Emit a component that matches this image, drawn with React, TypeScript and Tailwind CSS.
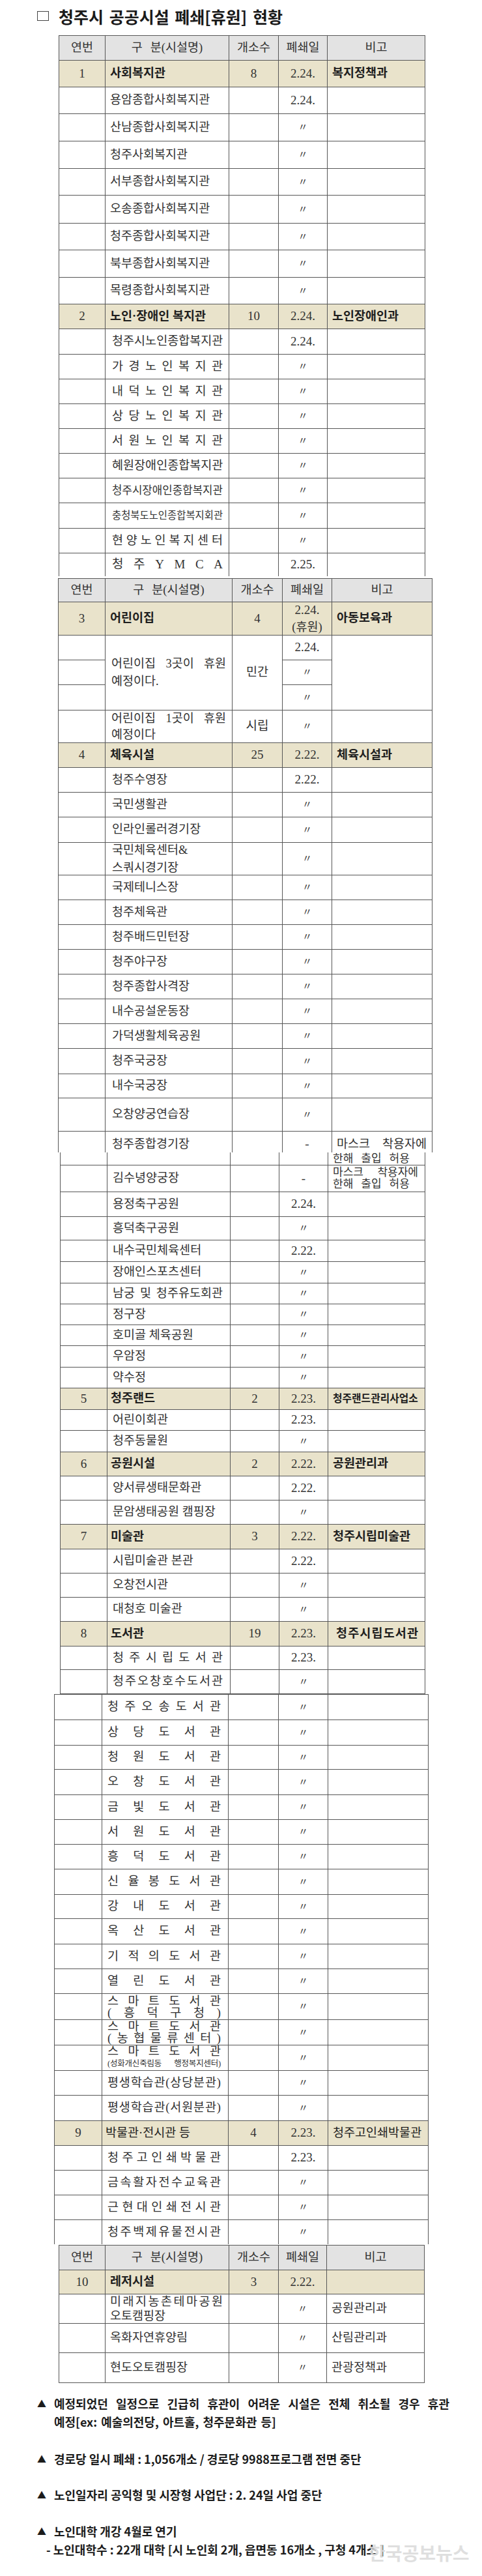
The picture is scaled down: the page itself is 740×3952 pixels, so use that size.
import type { ReactNode } from "react";

const DITTO = "〃";
const BD = "border-[#575757]";
const CAT = "bg-[#e9e3cb]";

function N({ children }: { children: ReactNode }) {
  return <span className="text-[19px]">{children}</span>;
}

function Spread({ t, className = "" }: { t: string; className?: string }) {
  return (
    <span className={`flex w-full justify-between ${className}`}>
      {Array.from(t).map((ch, i) => (
        <span key={i}>{ch}</span>
      ))}
    </span>
  );
}

function Words({ w, className = "" }: { w: string[]; className?: string }) {
  return (
    <span className={`flex w-full justify-between ${className}`}>
      {w.map((x, i) => (
        <span key={i}>{x}</span>
      ))}
    </span>
  );
}

type CellsProps = {
  h: string;
  no?: string;
  name?: ReactNode;
  cnt?: string;
  date?: ReactNode;
  note?: ReactNode;
  cat?: boolean;
  open?: boolean;
  pad?: string;
  x?: string;
};

function Cells({ h, no, name, cnt, date, note, cat, open, pad = "pl-[7px] pr-[9px]", x = "" }: CellsProps) {
  const b = `${h} flex items-center border-r ${open ? "" : "border-b"} ${BD} ${cat ? CAT : ""} ${x}`;
  const d =
    date === undefined ? (cat ? null : <span className="text-[15px]">{DITTO}</span>) : typeof date === "string" ? <N>{date}</N> : date;
  return (
    <>
      <div className={`${b} justify-center`}>{no && <N>{no}</N>}</div>
      <div className={`${b} ${pad} whitespace-nowrap ${cat ? "font-bold text-[#1f1f1f]" : ""}`}>{name}</div>
      <div className={`${b} justify-center`}>{cnt && <N>{cnt}</N>}</div>
      <div className={`${b} justify-center`}>{d}</div>
      <div className={`${b} pl-[7px] pr-[6px] whitespace-nowrap ${cat ? "font-bold text-[#1f1f1f]" : ""}`}>{note}</div>
    </>
  );
}

function Head({ h }: { h: string }) {
  const b = `${h} flex items-center justify-center border-r border-b ${BD} bg-[#e3e3e3]`;
  return (
    <>
      <div className={b}>연번</div>
      <div className={b}>
        <span>구</span>
        <span className="ml-[12px]">분(시설명)</span>
      </div>
      <div className={b}>개소수</div>
      <div className={b}>폐쇄일</div>
      <div className={b}>비고</div>
    </>
  );
}

function Seg({ cols, className = "", top = true, children }: { cols: string; className?: string; top?: boolean; children: ReactNode }) {
  return <div className={`grid w-fit border-l ${BD} ${top ? "border-t" : ""} ${cols} ${className}`}>{children}</div>;
}

function TwoLine({ a, b, className = "" }: { a: ReactNode; b: ReactNode; className?: string }) {
  return (
    <span className={`flex w-full flex-col ${className}`}>
      <span className="flex w-full">{a}</span>
      <span className="flex w-full">{b}</span>
    </span>
  );
}

function Note({ children, className = "" }: { children: ReactNode; className?: string }) {
  return (
    <div className={`flex pl-[57px] ${className}`}>
      <span className="flex h-[28px] w-[26px] shrink-0 items-center text-[14px]">▲</span>
      <div>{children}</div>
    </div>
  );
}

export default function App() {
  const padA = "pl-[10px] pr-[9px]";
  const padB = "pl-[10px] pr-[8px]";
  const padC = "pl-[8px] pr-[11px]";
  const padD = "pl-[8px] pr-[11px]";
  const cellB = `flex items-center border-r border-b ${BD}`;
  const maskLine = (
    <span className="flex gap-[12px]">
      <span>한해</span>
      <span>출입</span>
      <span>허용</span>
    </span>
  );

  return (
    <div className="relative h-[3952px] w-[740px] overflow-hidden bg-white font-['Liberation_Serif','Noto_Sans_CJK_KR',serif] text-[18.5px] text-[#333]">
      {/* title */}
      <div className="flex h-[54px] items-start pl-[57px] pt-[10px] font-['Noto_Sans_CJK_KR',sans-serif] text-[#1a1a1a]">
        <span className="mr-[15px] mt-[7px] h-[15px] w-[18px] border border-[#444]" />
        <span className="text-[25px] font-bold leading-[30px] [word-spacing:3px]">청주시 공공시설 폐쇄[휴원] 현황</span>
      </div>

      {/* 1 ~ 2 */}
      <Seg cols="grid-cols-[71px_190px_76px_75px_150px]" className="ml-[90px]">
        <Head h="h-[38px]" />
        <Cells h="h-[41px]" cat no="1" name="사회복지관" cnt="8" date="2.24." note="복지정책과" />
        <Cells h="h-[41px]" name="용암종합사회복지관" date="2.24." />
        <Cells h="h-[42px]" name="산남종합사회복지관" />
        <Cells h="h-[42px]" name="청주사회복지관" />
        <Cells h="h-[41px]" name="서부종합사회복지관" />
        <Cells h="h-[43px]" name="오송종합사회복지관" />
        <Cells h="h-[41px]" name="청주종합사회복지관" />
        <Cells h="h-[42px]" name="북부종합사회복지관" />
        <Cells h="h-[41px]" name="목령종합사회복지관" />
        <Cells h="h-[38px]" cat no="2" name="노인·장애인 복지관" cnt="10" date="2.24." note="노인장애인과" />
        <Cells h="h-[39px]" pad={padA} name={<Spread t="청주시노인종합복지관" />} date="2.24." />
        <Cells h="h-[38px]" pad={padA} name={<Spread t="가경노인복지관" />} />
        <Cells h="h-[38px]" pad={padA} name={<Spread t="내덕노인복지관" />} />
        <Cells h="h-[38px]" pad={padA} name={<Spread t="상당노인복지관" />} />
        <Cells h="h-[38px]" pad={padA} name={<Spread t="서원노인복지관" />} />
        <Cells h="h-[38px]" pad={padA} name={<Spread t="혜원장애인종합복지관" />} />
        <Cells h="h-[38px]" pad={padA} name={<Spread t="청주시장애인종합복지관" className="text-[16.8px]" />} />
        <Cells h="h-[39px]" pad={padA} name={<Spread t="충청북도노인종합복지회관" className="text-[15.4px]" />} />
        <Cells h="h-[38px]" pad={padA} name={<Spread t="현양노인복지센터" />} />
        <Cells h="h-[35px]" open pad={padA} name={<Spread t="청주YMCA" className="text-[19px]" />} date="2.25." />
      </Seg>

      {/* 3 ~ 4 */}
      <Seg cols="grid-cols-[72px_195px_77px_76px_154px]" className="ml-[89px] mt-[3px]">
        <Head h="h-[36px]" />
        <Cells
          h="h-[51px]"
          cat
          no="3"
          name="어린이집"
          cnt="4"
          date={
            <span className="flex flex-col items-center leading-[26px]">
              <N>2.24.</N>
              <span>(휴원)</span>
            </span>
          }
          note="아동보육과"
        />
        <div className={`h-[38px] ${cellB}`} />
        <div className={`row-span-3 ${cellB} pl-[9px] pr-[9px]`}>
          <span className="flex w-full flex-col leading-[27px]">
            <Words w={["어린이집", "3곳이", "휴원"]} />
            <span>예정이다.</span>
          </span>
        </div>
        <div className={`row-span-3 ${cellB} justify-center`}>민간</div>
        <div className={`h-[38px] ${cellB} justify-center`}>
          <N>2.24.</N>
        </div>
        <div className={`row-span-3 ${cellB}`} />
        <div className={`h-[38px] ${cellB}`} />
        <div className={`h-[38px] ${cellB} justify-center text-[15px]`}>{DITTO}</div>
        <div className={`h-[39px] ${cellB}`} />
        <div className={`h-[39px] ${cellB} justify-center text-[15px]`}>{DITTO}</div>
        <Cells
          h="h-[50px]"
          pad="pl-[9px] pr-[9px]"
          name={
            <span className="flex w-full flex-col leading-[25px]">
              <Words w={["어린이집", "1곳이", "휴원"]} />
              <span>예정이다</span>
            </span>
          }
          cnt="시립"
          note={null}
        />
        <Cells h="h-[38px]" cat no="4" name="체육시설" cnt="25" date="2.22." note="체육시설과" />
        <Cells h="h-[38px]" pad={padB} name="청주수영장" date="2.22." />
        <Cells h="h-[38px]" pad={padB} name="국민생활관" />
        <Cells h="h-[39px]" pad={padB} name="인라인롤러경기장" />
        <Cells h="h-[50px]" pad={padB} name={<TwoLine className="leading-[27px]" a="국민체육센터&" b="스쿼시경기장" />} />
        <Cells h="h-[38px]" pad={padB} name="국제테니스장" />
        <Cells h="h-[38px]" pad={padB} name="청주체육관" />
        <Cells h="h-[38px]" pad={padB} name="청주배드민턴장" />
        <Cells h="h-[38px]" pad={padB} name="청주야구장" />
        <Cells h="h-[38px]" pad={padB} name="청주종합사격장" />
        <Cells h="h-[38px]" pad={padB} name="내수공설운동장" />
        <Cells h="h-[38px]" pad={padB} name="가덕생활체육공원" />
        <Cells h="h-[39px]" pad={padB} name="청주국궁장" />
        <Cells h="h-[37px]" pad={padB} name="내수국궁장" />
        <Cells h="h-[51px]" pad={padB} name="오창양궁연습장" />
        <Cells
          h="h-[32px]"
          open
          x="pt-[7px]"
          pad={padB}
          name="청주종합경기장"
          date="-"
          note={<Words w={["마스크", "착용자에"]} className="pr-[2px]" />}
        />
      </Seg>

      {/* 4 (cont.) ~ 8 */}
      <Seg cols="grid-cols-[72px_189px_75px_75px_149px]" className="ml-[92px]" top={false}>
        <Cells h="h-[20px]" name={null} date={null} note={<span className="text-[17px] leading-[18px]">{maskLine}</span>} />
        <Cells
          h="h-[41px]"
          pad={padC}
          name="김수녕양궁장"
          date="-"
          note={
            <span className="flex w-full flex-col text-[17px] leading-[18px]">
              <Words w={["마스크", "착용자에"]} className="pr-[4px]" />
              {maskLine}
            </span>
          }
        />
        <Cells h="h-[38px]" pad={padC} name="용정축구공원" date="2.24." />
        <Cells h="h-[36px]" pad={padC} name="흥덕축구공원" />
        <Cells h="h-[33px]" pad={padC} name="내수국민체육센터" date="2.22." />
        <Cells h="h-[33px]" pad={padC} name="장애인스포츠센터" />
        <Cells h="h-[32px]" pad={padC} name={<Words w={["남궁", "및", "청주유도회관"]} />} />
        <Cells h="h-[32px]" pad={padC} name="정구장" />
        <Cells h="h-[32px]" pad={padC} name="호미골 체육공원" />
        <Cells h="h-[33px]" pad={padC} name="우암정" />
        <Cells h="h-[32px]" pad={padC} name="약수정" />
        <Cells h="h-[33px]" cat pad="pl-[5px]" no="5" name="청주랜드" cnt="2" date="2.23." note={<span className="text-[15.8px]">청주랜드관리사업소</span>} />
        <Cells h="h-[32px]" pad={padC} name="어린이회관" date="2.23." />
        <Cells h="h-[33px]" pad={padC} name="청주동물원" />
        <Cells h="h-[37px]" cat pad="pl-[5px]" no="6" name="공원시설" cnt="2" date="2.22." note="공원관리과" />
        <Cells h="h-[37px]" pad={padC} name="양서류생태문화관" date="2.22." />
        <Cells h="h-[37px]" pad={padC} name="문암생태공원 캠핑장" />
        <Cells h="h-[38px]" cat pad="pl-[5px]" no="7" name="미술관" cnt="3" date="2.22." note="청주시립미술관" />
        <Cells h="h-[37px]" pad={padC} name="시립미술관 본관" date="2.22." />
        <Cells h="h-[37px]" pad={padC} name="오창전시관" />
        <Cells h="h-[37px]" pad={padC} name="대청호 미술관" />
        <Cells h="h-[38px]" cat pad="pl-[5px]" no="8" name="도서관" cnt="19" date="2.23." note={<Spread t="청주시립도서관" className="pl-[5px] pr-[4px]" />} />
        <Cells h="h-[36px]" pad={padC} name={<Spread t="청주시립도서관" />} date="2.23." />
        <Cells h="h-[37px]" pad={padC} name={<Spread t="청주오창호수도서관" />} />
      </Seg>

      {/* 8 (cont.) ~ 9 */}
      <Seg cols="grid-cols-[73px_194px_77px_76px_154px]" className="ml-[83px]">
        <Cells h="h-[39px]" pad={padD} name={<Spread t="청주오송도서관" />} />
        <Cells h="h-[39px]" pad={padD} name={<Spread t="상당도서관" />} />
        <Cells h="h-[37px]" pad={padD} name={<Spread t="청원도서관" />} />
        <Cells h="h-[39px]" pad={padD} name={<Spread t="오창도서관" />} />
        <Cells h="h-[38px]" pad={padD} name={<Spread t="금빛도서관" />} />
        <Cells h="h-[38px]" pad={padD} name={<Spread t="서원도서관" />} />
        <Cells h="h-[38px]" pad={padD} name={<Spread t="흥덕도서관" />} />
        <Cells h="h-[39px]" pad={padD} name={<Spread t="신율봉도서관" />} />
        <Cells h="h-[37px]" pad={padD} name={<Spread t="강내도서관" />} />
        <Cells h="h-[39px]" pad={padD} name={<Spread t="옥산도서관" />} />
        <Cells h="h-[38px]" pad={padD} name={<Spread t="기적의도서관" />} />
        <Cells h="h-[38px]" pad={padD} name={<Spread t="열린도서관" />} />
        <Cells h="h-[40px]" pad={padD} name={<TwoLine className="leading-[18px]" a={<Spread t="스마트도서관" />} b={<Spread t="(흥덕구청)" />} />} />
        <Cells h="h-[39px]" pad={padD} name={<TwoLine className="leading-[18px]" a={<Spread t="스마트도서관" />} b={<Spread t="(농협물류센터)" />} />} />
        <Cells
          h="h-[39px]"
          pad={padD}
          name={
            <TwoLine
              className="leading-[19px]"
              a={<Spread t="스마트도서관" />}
              b={<Words w={["(성화개신죽림동", "행정복지센터)"]} className="text-[12.5px] tracking-[-0.2px]" />}
            />
          }
        />
        <Cells h="h-[38px]" pad={padD} name={<Spread t="평생학습관(상당분관)" />} />
        <Cells h="h-[39px]" pad={padD} name={<Spread t="평생학습관(서원분관)" />} />
        <Cells
          h="h-[38px]"
          cat
          pad="pl-[5px]"
          no="9"
          name={<span className="font-normal text-[#222]">박물관·전시관 등</span>}
          cnt="4"
          date="2.23."
          note={<span className="font-normal text-[#222]">청주고인쇄박물관</span>}
        />
        <Cells h="h-[38px]" pad={padD} name={<Spread t="청주고인쇄박물관" />} date="2.23." />
        <Cells h="h-[38px]" pad={padD} name={<Spread t="금속활자전수교육관" />} />
        <Cells h="h-[38px]" pad={padD} name={<Spread t="근현대인쇄전시관" />} />
        <Cells h="h-[37px]" open pad={padD} name={<Spread t="청주백제유물전시관" />} />
      </Seg>

      {/* 10 */}
      <Seg cols="grid-cols-[71px_190px_76px_74px_150px]" className="ml-[90px] mt-[1px]">
        <Head h="h-[38px]" />
        <Cells h="h-[37px]" cat no="10" name="레저시설" cnt="3" date="2.22." note={null} />
        <Cells
          h="h-[45px]"
          name={<TwoLine className="leading-[22px]" a={<Spread t="미래지농촌테마공원" />} b="오토캠핑장" />}
          note="공원관리과"
        />
        <Cells h="h-[45px]" name="옥화자연휴양림" note="산림관리과" />
        <Cells h="h-[46px]" name="현도오토캠핑장" note="관광정책과" />
      </Seg>

      {/* notes */}
      <div className="mt-[17px] font-['Noto_Sans_CJK_KR',sans-serif] text-[18px] font-bold leading-[28px] text-[#1c1c1c]">
        <Note>
          <div className="w-[607px]">
            <Words w={["예정되었던", "일정으로", "긴급히", "휴관이", "어려운", "시설은", "전체", "취소될", "경우", "휴관"]} />
            <div className="[word-spacing:2px]">예정[ex: 예술의전당, 아트홀, 청주문화관 등]</div>
          </div>
        </Note>
        <Note className="mt-[29px]">경로당 일시 폐쇄 : 1,056개소 / 경로당 9988프로그램 전면 중단</Note>
        <Note className="mt-[27px]">노인일자리 공익형 및 시장형 사업단 : 2. 24일 사업 중단</Note>
        <Note className="mt-[28px]">노인대학 개강 4월로 연기</Note>
        <div className="pl-[71px]">- 노인대학수 : 22개 대학 [시 노인회 2개, 읍면동 16개소 , 구청 4개소 ]</div>
      </div>

      {/* watermark */}
      <div className="absolute left-[566px] top-[3895px] font-['Noto_Sans_CJK_KR',sans-serif] text-[28px] font-bold text-[#dcdcdc] opacity-90">
        한국공보뉴스
      </div>
    </div>
  );
}
